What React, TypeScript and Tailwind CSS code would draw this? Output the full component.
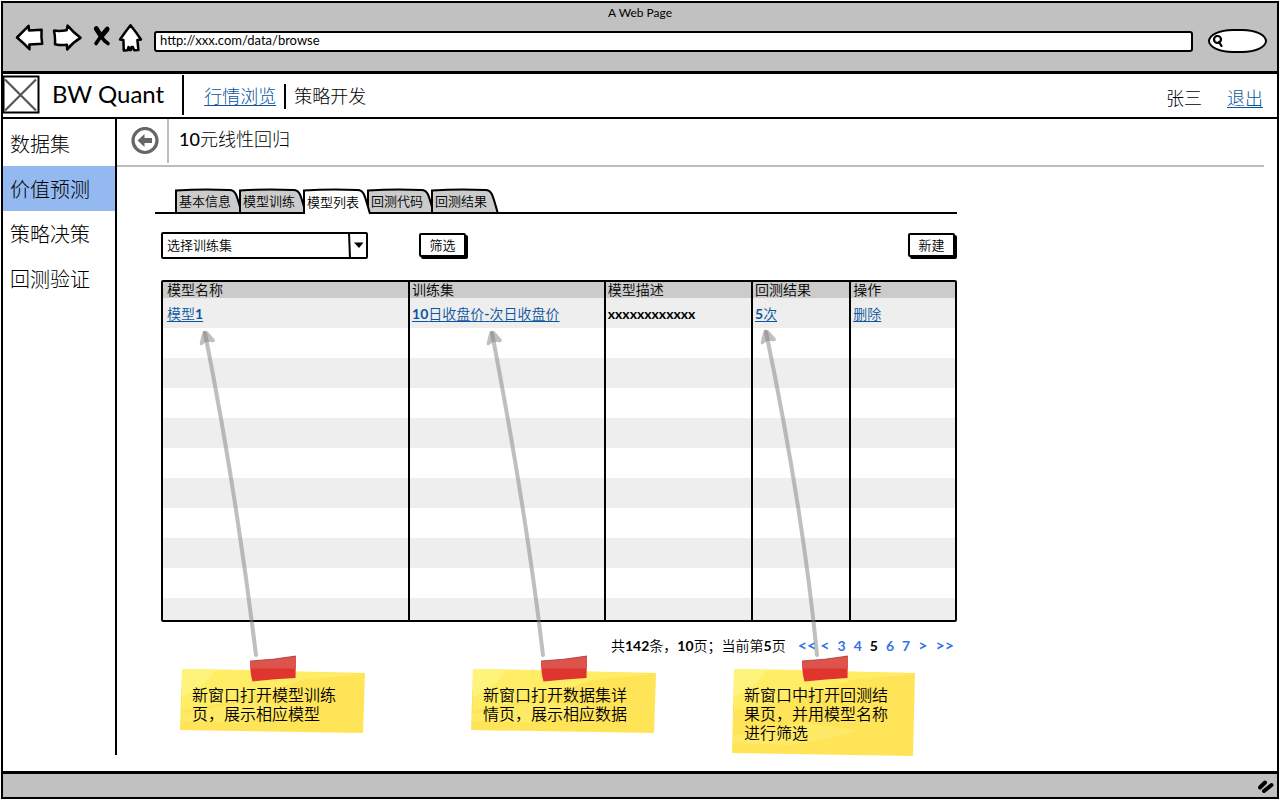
import React from "react";

const base = "font-['Lato','Noto_Sans_CJK_SC',sans-serif]";

const iconProps = {
  fill: "white",
  stroke: "black",
  strokeWidth: 2.5,
  strokeLinejoin: "round" as const,
  strokeLinecap: "round" as const,
  "aria-hidden": true,
};

function BrowserBar() {
  return (
    <header className="flex h-[71px] flex-col border-b-[3px] border-black bg-[#c1c1c1]">
      <div className="pt-[2px] text-center text-[12px] leading-4">A Web Page</div>
      <div className="flex items-center pt-px pr-[10px] pl-[12px]">
        <button aria-label="Back" className="shrink-0">
          <svg width="30" height="28" viewBox="0 0 30 28" {...iconProps}>
            <path d="M2 13.5 13.6 1.8 14 6.5 26.6 5.8Q26 13 27.2 19.8L14.4 20.5 14.5 25.2Q8 18.5 2 13.5Z" />
          </svg>
        </button>
        <button aria-label="Forward" className="ml-[7px] shrink-0">
          <svg width="30" height="28" viewBox="0 0 30 28" {...iconProps}>
            <path d="M2 6.6Q8 7.4 14.6 6.2L15.6 1.6Q21 8 28.5 13.8 20.5 18.5 15.2 25.4L15 20.8Q9 21.6 3 20.2 3.4 13 2 6.6Z" />
          </svg>
        </button>
        <button aria-label="Stop" className="mb-[4px] ml-[10px] shrink-0">
          <svg width="20" height="22" viewBox="0 0 20 22" aria-hidden="true">
            <path d="M4 3Q7 8 9.500 12T16 18.500M15.500 3.500Q9.500 9.500 4 18.500" fill="none" stroke="black" strokeWidth="3.600" strokeLinecap="round" />
            <path d="M4.500 4 9 11M15 4.500 10 10.500" fill="none" stroke="black" strokeWidth="5" strokeLinecap="round" />
          </svg>
        </button>
        <button aria-label="Home" className="ml-[6px] shrink-0">
          <svg width="25" height="30" viewBox="0 0 25 30" {...iconProps}>
            <path d="M12.500 2.200Q18 9 23 16.500L19.400 17 20.400 27 16.200 27.200 14.800 24 13.500 24 12.800 27 11.500 27 10.500 24 9.500 27.200 5.800 27.400 5.400 17 2 16.500Q7.500 8.500 12.500 2.200Z" />
          </svg>
        </button>
        <input
          aria-label="Address"
          defaultValue="http://xxx.com/data/browse"
          className="mt-[7px] ml-[11px] h-[21px] min-w-0 flex-1 rounded-[3px] border-2 border-black bg-white px-1 pb-[2px] text-[13px]"
        />
        <label className="mt-[7px] ml-[15px] flex h-[24px] w-[59px] shrink-0 items-center rounded-[50%/60%] border-2 border-black bg-white pl-[2px]">
          <svg width="11" height="12" viewBox="0 0 11 12" aria-hidden="true" fill="none" stroke="black" strokeWidth="2.200">
            <circle cx="5.5" cy="4.5" r="3.5" />
            <path d="M7 7 9.5 11" strokeLinecap="round" />
          </svg>
          <input aria-label="Search" className="w-8 bg-transparent text-[12px] outline-none" />
        </label>
      </div>
    </header>
  );
}

function TopNav() {
  return (
    <nav className="flex h-[45px] items-stretch border-b-2 border-black">
      <svg width="37" height="39" viewBox="0 0 37 39" className="mt-px shrink-0" aria-hidden="true">
        <rect x="0.5" y="1.5" width="35" height="36" fill="white" stroke="black" strokeWidth="2" />
        <path d="M2 4.5 33 35.5M33 4.5 2 35.5" stroke="#555" strokeWidth="2.2" />
      </svg>
      <div className="ml-[12px] pt-[4px] text-[24px] leading-[32px] whitespace-nowrap">BW Quant</div>
      <div className="mt-px mb-[2px] ml-[18px] w-[2px] bg-black" />
      <div className="ml-[20px] flex items-center pt-[2px] text-[18px] font-light whitespace-nowrap">
        <a href="#market" className="text-[#0b55a0] underline underline-offset-2">行情浏览</a>
        <span className="mx-[8px] h-[25px] w-[2px] bg-black" />
        <a href="#strategy">策略开发</a>
      </div>
      <div className="ml-auto flex items-center gap-[25px] pt-[5px] pr-[14px] text-[18px] font-light whitespace-nowrap">
        <span>张三</span>
        <a href="#logout" className="text-[#0b55a0] underline underline-offset-2">退出</a>
      </div>
    </nav>
  );
}

const menu = ["数据集", "价值预测", "策略决策", "回测验证"];

function Sidebar() {
  return (
    <aside className="mb-[16px] w-[114px] shrink-0 border-r-2 border-black pt-[2px] text-[20px] font-light">
      {menu.map((m) => (
        <a
          key={m}
          href="#menu"
          className={m === "价值预测" ? "flex h-[45px] items-center bg-[#94b9f0] pl-[7px]" : "flex h-[45px] items-center pl-[7px]"}
        >
          {m}
        </a>
      ))}
    </aside>
  );
}

const tabs = ["基本信息", "模型训练", "模型列表", "回测代码", "回测结果"];

function Tabs() {
  return (
    <div role="tablist" className="flex h-[26px] border-b-2 border-black pl-[20px] text-[13px] font-[350]">
      {tabs.map((t) => {
        const active = t === "模型列表";
        return (
          <button
            key={t}
            role="tab"
            aria-selected={active}
            className={active ? "relative z-10 h-[26px] w-[64px] shrink-0 text-left" : "relative h-[26px] w-[64px] shrink-0 text-left"}
          >
            <svg width="70" height="28" viewBox="0 0 70 28" className="absolute top-0 left-0 max-w-none" aria-hidden="true">
              <path
                d="M1 26V2.5Q26 1 54 2Q59 1.8 61 6.5T67 26"
                fill={active ? "white" : "#cbcbcb"}
                stroke="black"
                strokeWidth="2"
              />
              {!active && <path d="M0 25H68" stroke="black" strokeWidth="2" />}
            </svg>
            <span className={active ? "relative pl-[4px] leading-[28px]" : "relative pl-[4px] leading-[24px]"}>{t}</span>
          </button>
        );
      })}
    </div>
  );
}

function SketchButton({ children }: { children: React.ReactNode }) {
  return (
    <button className="mr-[2px] h-[24px] w-[47px] rounded-[2px] border-2 border-black bg-white text-[13px] leading-[20px] font-[350] shadow-[2px_2px_0_black]">
      {children}
    </button>
  );
}

const link = "text-[#0b55a0] underline underline-offset-2";

const emptyRows = [1, 2, 3, 4, 5, 6, 7, 8, 9];

function ModelTable() {
  const head = "border-r-2 border-black bg-[#cbcbcb] px-[2px] text-left font-[350] first:pl-[4px] last:border-r-0";
  const cell = "border-r-2 border-black px-[2px] first:pl-[4px] last:border-r-0";
  return (
    <table className="ml-[6px] w-[calc(100%-6px)] table-fixed border-separate border-spacing-0 rounded-[2px] border-2 border-black text-[14px]">
      <colgroup>
        <col className="w-[31.2%]" />
        <col className="w-[24.7%]" />
        <col className="w-[18.6%]" />
        <col className="w-[12.4%]" />
        <col />
      </colgroup>
      <thead>
        <tr className="h-[16px] leading-[16px]">
          <th className={head}>模型名称</th>
          <th className={head}>训练集</th>
          <th className={head}>模型描述</th>
          <th className={head}>回测结果</th>
          <th className={head}>操作</th>
        </tr>
      </thead>
      <tbody className="font-[350]">
        <tr className="h-[30px] bg-[#eeeeee]">
          <td className={cell}><a href="#model" className={link}>模型<span className="font-bold">1</span></a></td>
          <td className={cell}><a href="#set" className={link}><span className="font-bold">10</span>日收盘价<span className="font-bold">-</span>次日收盘价</a></td>
          <td className={cell}><span className="font-bold">xxxxxxxxxxxx</span></td>
          <td className={cell}><a href="#result" className={link}><span className="font-bold">5</span>次</a></td>
          <td className={cell}><a href="#delete" className={link}>删除</a></td>
        </tr>
        {emptyRows.map((r) => (
          <tr key={r} className="h-[30px] odd:bg-[#eeeeee]">
            <td className={cell} /><td className={cell} /><td className={cell} /><td className={cell} /><td className={cell} />
          </tr>
        ))}
        <tr className="h-[22px] bg-[#eeeeee]">
          <td className={cell} /><td className={cell} /><td className={cell} /><td className={cell} /><td className={cell} />
        </tr>
      </tbody>
    </table>
  );
}

function Pagination() {
  return (
    <div className="flex h-[20px] items-center justify-end pr-[3px] text-[14px] font-[350] whitespace-nowrap">
      <span>共<b>142</b>条，<b>10</b>页；当前第<b>5</b>页</span>
      <nav aria-label="Pages" className="ml-[12px] flex items-center gap-[8px] font-bold text-[#3574e2]">
        <a href="#first" className="text-[16px]">&lt;&lt;</a>
        <a href="#prev" className="-ml-1 text-[16px]">&lt;</a>
        <a href="#3">3</a>
        <a href="#4">4</a>
        <span className="text-black">5</span>
        <a href="#6">6</a>
        <a href="#7">7</a>
        <a href="#next" className="text-[16px]">&gt;</a>
        <a href="#last" className="text-[16px]">&gt;&gt;</a>
      </nav>
    </div>
  );
}

function Note({ lines }: { lines: string[] }) {
  const tall = lines.length > 2;
  const h = tall ? 86 : 64;
  return (
    <div className="relative w-[186px] shrink-0 px-[12px] pt-[30px] pb-[20px] text-[16px] leading-[19px]">
      <svg width="188" height="102" viewBox="0 0 188 102" className="absolute top-0 left-0 max-w-none" aria-hidden="true">
        <path d={tall ? "M2 14 183 18 181 101 0 98Z" : "M2 14 185 18 183 78 0 75Z"} fill="#ffe457" />
        <path d="M2 14 70 15 183 19 120 25Q60 48 2 55Z" fill="#fff06a" opacity="0.75" />
        <path d={`M1 ${h - 5} 70 ${h - 18} 130 ${h - 10} 60 ${h + 4} 1 ${h + 2}Z`} fill="#fff17c" opacity="0.45" />
        <path d="M2 14 35 15Q25 32 2 42Z" fill="#fff98a" opacity="0.6" />
        <path d="M70 6Q92 5 116 1L115.500 23Q94 24 72.500 26.500Q70 18 70 6Z" fill="#e0352f" />
        <path d="M70 6Q92 5 116 1V13.500H71Z" fill="#dc544c" />
        <path d="M70 6Q92 5 116 1" fill="none" stroke="#a8433e" strokeWidth="0.8" />
      </svg>
      <p className="relative font-[350] whitespace-nowrap">
        {lines.map((l) => (
          <span key={l} className="block">{l}</span>
        ))}
      </p>
    </div>
  );
}

function Arrows() {
  return (
    <svg width="803" height="340" viewBox="155 325 803 340" className="pointer-events-none absolute top-[158px] left-0 max-w-none" aria-hidden="true">
      <g fill="none" stroke="#808080" strokeOpacity="0.5" strokeWidth="4" strokeLinecap="round">
        <path d="M205 333Q236 490 256 655" />
        <path d="M492 333Q526 510 543 655" />
        <path d="M766 332Q803 510 817 655" />
      </g>
      <g fill="#808080" fillOpacity="0.5">
        <path d="M203 331Q207 330 209 333L215 340Q215 343 211 342L206 342 202 345Q199 346 200 342Q201 337 203 331Z" />
        <path d="M490 331Q494 330 496 333L502 340Q502 343 498 342L493 342 489 345Q486 346 487 342Q488 337 490 331Z" />
        <path d="M764 330Q768 329 770 332L776 339Q776 342 772 341L767 341 763 344Q760 345 761 341Q762 336 764 330Z" />
      </g>
    </svg>
  );
}

function Content() {
  return (
    <main className="min-w-0 flex-1">
      <div className="mr-[13px] flex h-[48px] border-b-2 border-[#bdbdbd]">
        <button aria-label="返回" className="mt-[8px] ml-[14px] h-[28px] w-[28px]">
          <svg width="28" height="28" viewBox="0 0 28 28" aria-hidden="true">
            <circle cx="14" cy="13.500" r="12" fill="none" stroke="#666" strokeWidth="3.200" />
            <path d="M6.500 13.500 13.500 7V11H21V16H13.500V20Z" fill="#666" />
          </svg>
        </button>
        <div className="mb-[2px] ml-[8px] w-[2px] bg-[#bdbdbd]" />
        <h1 className="ml-[10px] text-[18px] leading-[40px] font-light"><span className="font-medium">10</span>元线性回归</h1>
      </div>
      <div className="relative ml-[38px] max-w-[802px] pt-[21px]">
        <Tabs />
        <div className="flex items-start pt-[18px] pb-[21px] pl-[6px]">
          <div className="relative h-[27px] w-[207px]">
            <select aria-label="选择训练集" className="h-[27px] w-full appearance-none rounded-[2px] border-2 border-black bg-white px-[4px] text-[13px] font-[350]">
              <option>选择训练集</option>
            </select>
            <svg width="20" height="27" viewBox="0 0 20 27" className="pointer-events-none absolute top-0 right-0" aria-hidden="true">
              <path d="M1 1 2 26" stroke="black" strokeWidth="2" />
              <path d="M6 10.500H15.500L11 16Z" />
            </svg>
          </div>
          <div className="ml-[51px]"><SketchButton>筛选</SketchButton></div>
          <div className="ml-auto"><SketchButton>新建</SketchButton></div>
        </div>
        <ModelTable />
        <div className="pt-[13px]"><Pagination /></div>
        <div className="flex pl-[25px]">
          <Note lines={["新窗口打开模型训练", "页，展示相应模型"]} />
          <div className="w-[105px]" />
          <Note lines={["新窗口打开数据集详", "情页，展示相应数据"]} />
          <div className="w-[75px]" />
          <Note lines={["新窗口中打开回测结", "果页，并用模型名称", "进行筛选"]} />
        </div>
        <Arrows />
      </div>
    </main>
  );
}

export default function App() {
  return (
    <div className={`${base} flex min-h-screen bg-white p-px text-black`}>
      <div className="flex min-w-0 flex-1 flex-col border-2 border-black">
        <BrowserBar />
        <TopNav />
        <div className="flex flex-1">
          <Sidebar />
          <Content />
        </div>
        <footer className="flex h-[26px] items-center justify-end border-t-[3px] border-black bg-[#c1c1c1] pr-[2px]">
          <svg width="18" height="16" viewBox="0 0 18 16" fill="none" stroke="black" strokeWidth="4" strokeLinecap="round" aria-hidden="true">
            <path d="M3 9.500 8 4.500M7 13 14.500 7" />
          </svg>
        </footer>
      </div>
    </div>
  );
}
